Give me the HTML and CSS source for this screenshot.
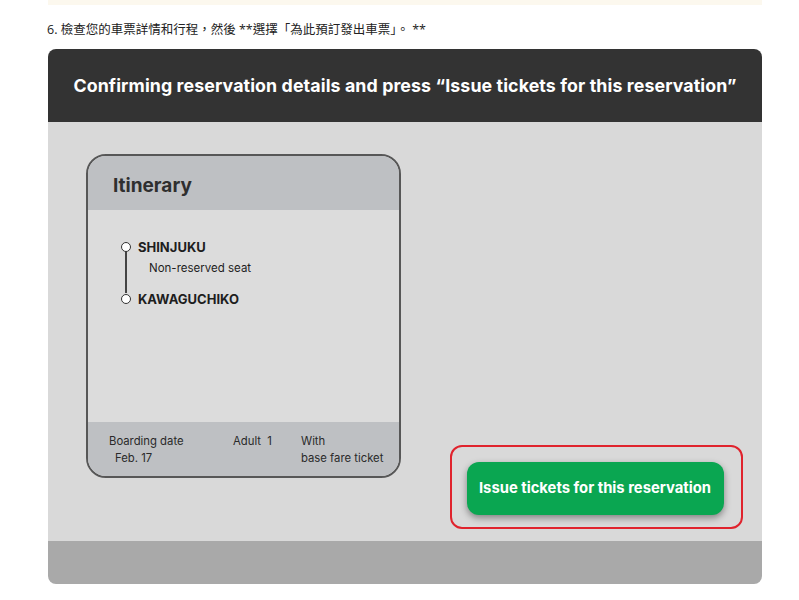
FILE: index.html
```html
<!DOCTYPE html>
<html lang="zh-Hant">
<head>
<meta charset="utf-8">
<title>Issue tickets</title>
<link rel="stylesheet" href="styles.css">
</head>
<body>
<div class="top-strip"></div>
<p class="step">6. 檢查您的車票詳情和行程，然後 **選擇「為此預訂發出車票」。 **</p>
<div class="panel">
  <div class="panel-head">Confirming reservation details and press “Issue tickets for this reservation”</div>
  <div class="panel-body">
    <div class="card">
      <div class="card-head">Itinerary</div>
      <div class="card-body">
        <div class="route">
          <div class="stop"><span class="dot"></span><span class="station">SHINJUKU</span></div>
          <div class="seat">Non-reserved seat</div>
          <div class="stop"><span class="dot"></span><span class="station">KAWAGUCHIKO</span></div>
          <span class="line"></span>
        </div>
      </div>
      <div class="card-foot">
        <div class="col col-date"><div>Boarding date</div><div class="indent">Feb. 17</div></div>
        <div class="col col-adult"><div>Adult&nbsp; 1</div></div>
        <div class="col col-with"><div>With</div><div>base fare ticket</div></div>
      </div>
    </div>
    <div class="highlight">
      <div class="issue-btn">Issue tickets for this reservation</div>
    </div>
  </div>
  <div class="panel-foot"></div>
</div>
</body>
</html>
```
FILE: styles.css
```css
* { box-sizing: border-box; }
body {
  margin: 0;
  background: #ffffff;
  font-family: "Open Sans", "Noto Sans CJK TC", sans-serif;
}
.top-strip {
  margin: 0 37px 0 48px;
  height: 5px;
  background: #fcf8ee;
}
.step {
  margin: 17px 0 0 47px;
  height: 27px;
  font-size: 12.5px;
  line-height: 16px;
  color: #222;
}
.panel {
  margin: 0 37px 0 48px;
  width: 714px;
  border-radius: 8px;
  overflow: hidden;
}
.panel-head {
  height: 73px;
  background: #333333;
  color: #ffffff;
  font-family: "Inter", "Open Sans", sans-serif;
  font-weight: 700;
  font-size: 17.8px;
  letter-spacing: 0.1px;
  display: flex;
  align-items: center;
  justify-content: center;
  padding-bottom: 1px;
}
.panel-body {
  height: 419px;
  background: #d9d9d9;
  display: flex;
  padding: 32px 19px 12px 38px;
}
.card {
  width: 315px;
  height: 324px;
  border: 2px solid #575757;
  border-radius: 20px;
  overflow: hidden;
  display: flex;
  flex-direction: column;
  font-family: "Inter", "Open Sans", sans-serif;
  color: #1e1e1e;
}
.card-head {
  height: 54px;
  background: #bec0c3;
  font-size: 19px;
  font-weight: 700;
  color: #2f2f2f;
  padding: 19px 0 0 25px;
  line-height: 22px;
}
.card-body {
  flex: 1;
  background: #dcdcdc;
  padding: 29px 0 0 33px;
}
.route {
  position: relative;
}
.stop {
  display: flex;
  align-items: center;
  height: 16px;
}
.dot {
  width: 10px;
  height: 10px;
  border: 1.5px solid #333;
  background: #fff;
  border-radius: 50%;
  margin-right: 7px;
  position: relative;
  z-index: 1;
}
.station {
  font-weight: 700;
  font-size: 13px;
}
.seat {
  font-size: 11.5px;
  padding-left: 28px;
  height: 36px;
  line-height: 26px;
}
.line {
  position: absolute;
  left: 4.3px;
  top: 10px;
  width: 1.5px;
  height: 44px;
  background: #444;
}
.card-foot {
  height: 54px;
  background: #bec0c3;
  display: flex;
  font-size: 11.3px;
  line-height: 17px;
  color: #2a2a2a;
  padding: 11px 0 0 21px;
}
.col-date { width: 124px; }
.col-date .indent { padding-left: 6px; }
.col-adult { width: 68px; }
.highlight {
  margin-left: auto;
  align-self: flex-end;
  width: 293px;
  height: 84px;
  border: 2.5px solid #e0232d;
  border-radius: 12px;
  padding: 14.5px 16.5px 0 14.5px;
}
.issue-btn {
  height: 53px;
  width: 257px;
  background: #0aa651;
  border-radius: 12px;
  box-shadow: 0 3px 7px rgba(0, 0, 0, 0.4);
  color: #ffffff;
  font-family: "Inter", "Open Sans", sans-serif;
  font-weight: 700;
  font-size: 14.8px;
  display: flex;
  align-items: center;
  justify-content: center;
}
.panel-foot {
  height: 43px;
  background: #a9a9a9;
}
```
